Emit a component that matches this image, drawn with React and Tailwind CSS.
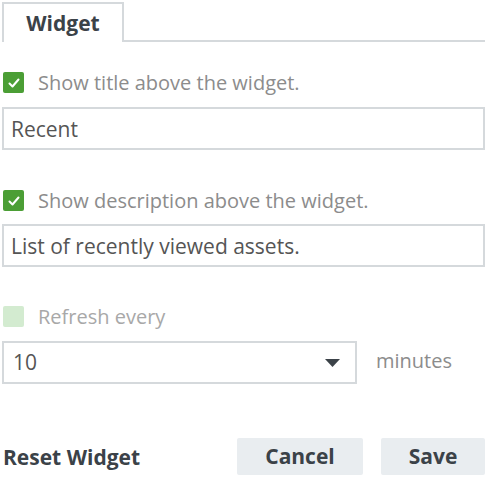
import { useState } from "react";

function Check({ checked, disabled }) {
  return (
    <div
      className={
        "w-[21px] h-[21px] shrink-0 rounded-[2px] flex items-center justify-center " +
        (disabled ? "bg-[#d3ebd0]" : "bg-[#4b9e35]")
      }
    >
      {checked && (
        <svg width="14" height="14" viewBox="0 0 14 14">
          <path d="M2.5 7.5 L5.5 10.5 L11.5 3.5" fill="none" stroke="white" strokeWidth="2" strokeLinecap="round" strokeLinejoin="round" />
        </svg>
      )}
    </div>
  );
}

export default function App() {
  const [title, setTitle] = useState("Recent");
  const [desc, setDesc] = useState("List of recently viewed assets.");

  return (
    <div className="w-[487px] h-[477px] bg-white font-['Open_Sans',sans-serif] px-[2px] pt-[2px]">
      <div className="flex border-b-2 border-[#d5d9dc] w-[483px]">
        <div className="w-[122px] h-[40px] border-2 border-b-0 border-[#d5d9dc] bg-white -mb-[2px] flex items-center justify-center text-[21px] leading-none font-bold text-[#3b4248]">
          Widget
        </div>
      </div>

      <div className="flex items-center h-[21px] gap-[14px] mt-[30px] pl-[1px]">
        <Check checked />
        <span className="text-[20px] leading-none text-[#8c8c8c]">Show title above the widget.</span>
      </div>
      <input
        value={title}
        onChange={(e) => setTitle(e.target.value)}
        className="block mt-[14px] w-[483px] h-[43px] border-2 border-[#d5d9dc] px-[7px] text-[21px] text-[#555] outline-none"
      />

      <div className="flex items-center h-[21px] gap-[14px] mt-[40px] pl-[1px]">
        <Check checked />
        <span className="text-[20px] leading-none text-[#8c8c8c]">Show description above the widget.</span>
      </div>
      <input
        value={desc}
        onChange={(e) => setDesc(e.target.value)}
        className="block mt-[13px] w-[483px] h-[43px] border-2 border-[#d5d9dc] px-[7px] text-[21px] text-[#555] outline-none"
      />

      <div className="flex items-center h-[21px] gap-[14px] mt-[39px] pl-[1px]">
        <Check disabled />
        <span className="text-[20px] leading-none text-[#a8a8a8]">Refresh every</span>
      </div>
      <div className="flex items-center mt-[14px]">
        <div className="w-[355px] h-[43px] border-2 border-[#d5d9dc] flex items-center justify-between pl-[9px] pr-[15px]">
          <span className="text-[21px] text-[#555]">10</span>
          <svg width="15" height="8" viewBox="0 0 15 8">
            <path d="M0 0 H15 L7.5 8 Z" fill="#3b4248" />
          </svg>
        </div>
        <span className="ml-[19px] text-[20px] text-[#8c8c8c] -mt-[3px]">minutes</span>
      </div>

      <div className="flex items-center mt-[54px]">
        <span className="text-[21px] leading-none font-bold text-[#3b4248] pl-[1px] mt-[2px]">Reset Widget</span>
        <button className="ml-auto w-[126px] h-[37px] bg-[#e9edf0] rounded-[2px] text-[21px] leading-none font-bold text-[#3b4248]">
          Cancel
        </button>
        <button className="ml-[18px] w-[104px] h-[37px] bg-[#e9edf0] rounded-[2px] text-[21px] leading-none font-bold text-[#3b4248]">
          Save
        </button>
      </div>
    </div>
  );
}
